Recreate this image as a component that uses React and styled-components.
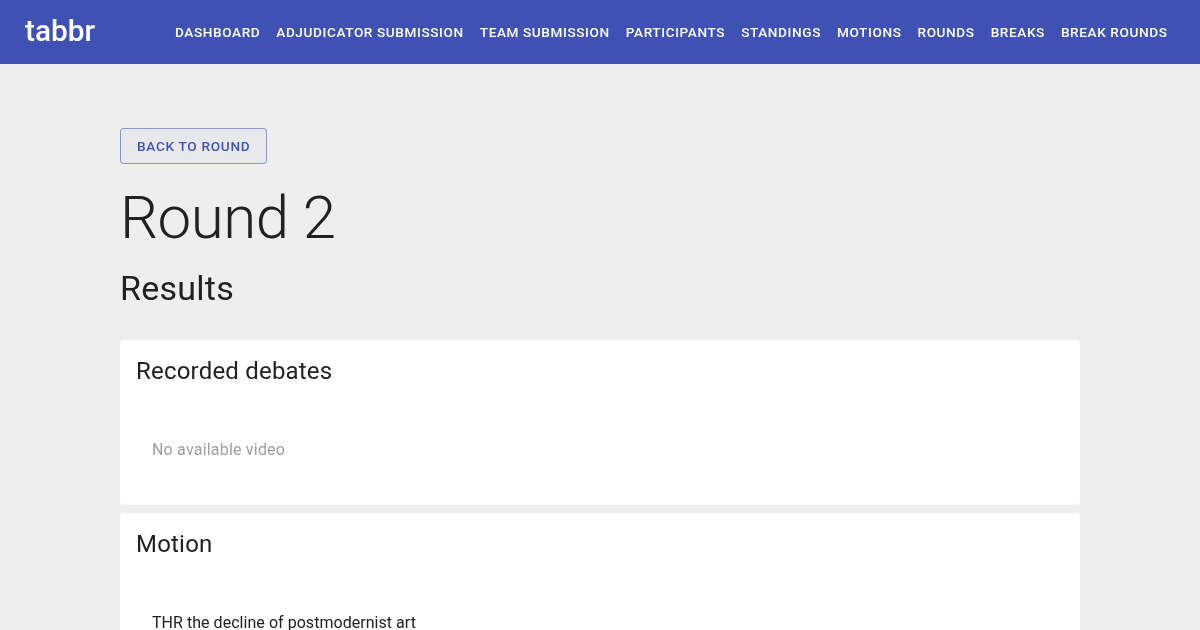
import React from "react";
import styled, { createGlobalStyle } from "styled-components";

const Global = createGlobalStyle`
  html, body { margin: 0; padding: 0; height: 630px; overflow: hidden; background: #eeeeee; }
  * { box-sizing: border-box; }
  body { font-family: Roboto, "Liberation Sans", sans-serif; color: #212121; }
  #root { will-change: transform; }
`;
const Nav = styled.nav`
  height: 64px; background: #3f51b5; display: flex; align-items: center; padding: 0 24px 0 25px;
`;
const Logo = styled.div`
  color: #fff; font-size: 29.8px; line-height: 64px; font-weight: 500; width: 150px; flex: none;
  position: relative; top: -1px; letter-spacing: 0;
`;
const Menu = styled.div`
  display: flex; gap: 16px;
`;
const MenuItem = styled.a`
  color: #fff; font-size: 13.6px; font-weight: 500; letter-spacing: 0.6px; line-height: 16px; white-space: nowrap;
`;
const Main = styled.main`
  width: 960px; margin: 0 auto; padding-top: 64px;
`;
const BackButton = styled.button`
  display: block; height: 36px; padding: 0 16px; background: rgba(63,81,181,.03); border: 1px solid rgba(63,81,181,.55); border-radius: 4px;
  color: #3f51b5; font: 500 13.6px Roboto, sans-serif; letter-spacing: 0.7px;
`;
const Title = styled.h1`
  margin: 16px 0 0; font-size: 60px; font-weight: 300; line-height: 76px; letter-spacing: -0.5px; color: #212121;
`;
const Subtitle = styled.h2`
  margin: 8px 0 0; font-size: 34px; font-weight: 400; line-height: 48px; letter-spacing: 0.25px;
`;
const Cards = styled.div`
  margin-top: 28px;
`;
const Card = styled.section`
  background: #fff; border-radius: 4px; padding: 16px; margin-bottom: 8px;
`;
const CardTitle = styled.h3`
  margin: 0; font-size: 24px; font-weight: 400; line-height: 30px; letter-spacing: 0.2px;
`;
const CardBody = styled.p`
  margin: 0; padding: 52px 16px 27px; font-size: 16px; line-height: 24px;
  letter-spacing: ${p => p.$muted ? "0.2px" : "0.04px"};
  color: ${p => p.$muted ? "#9e9e9e" : "#212121"};
`;
const items = ["DASHBOARD","ADJUDICATOR SUBMISSION","TEAM SUBMISSION","PARTICIPANTS","STANDINGS","MOTIONS","ROUNDS","BREAKS","BREAK ROUNDS"];
export default function App() {
  return (
    <>
      <Global />
      <Nav>
        <Logo>tabbr</Logo>
        <Menu>{items.map(i => <MenuItem key={i}>{i}</MenuItem>)}</Menu>
      </Nav>
      <Main>
        <BackButton>BACK TO ROUND</BackButton>
        <Title>Round 2</Title>
        <Subtitle>Results</Subtitle>
        <Cards>
          <Card>
            <CardTitle>Recorded debates</CardTitle>
            <CardBody $muted>No available video</CardBody>
          </Card>
          <Card>
            <CardTitle>Motion</CardTitle>
            <CardBody>THR the decline of postmodernist art</CardBody>
          </Card>
        </Cards>
      </Main>
    </>
  );
}
